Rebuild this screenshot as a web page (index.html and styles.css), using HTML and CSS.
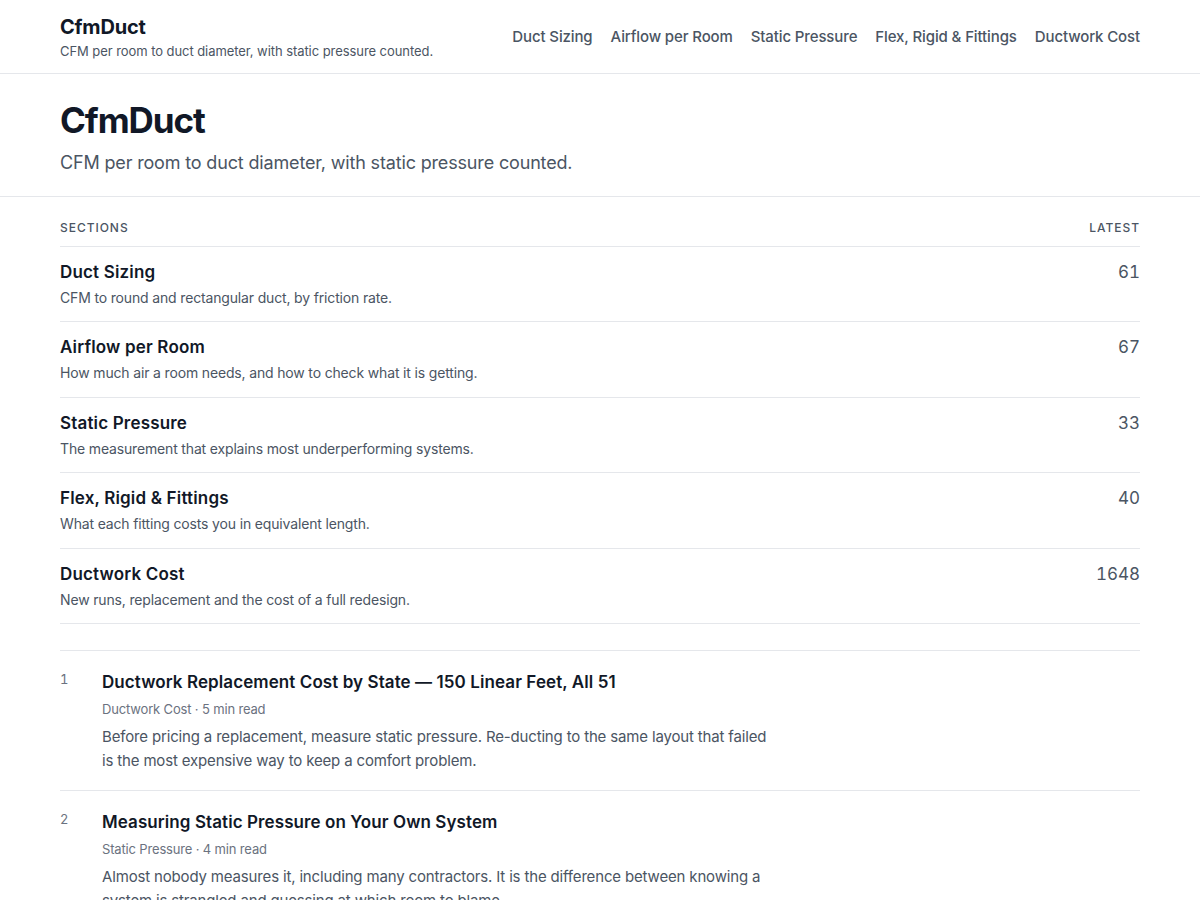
FILE: index.html
```html
<!DOCTYPE html>
<html lang="en">
<head>
    <meta charset="UTF-8">
    <meta name="viewport" content="width=device-width, initial-scale=1.0">
    <title>CfmDuct</title>
    <link rel="stylesheet" href="styles.css">
</head>
<body>
    <header class="site-header">
        <div class="wrap header-inner">
            <div class="brand">
                <a class="brand-name" href="#">CfmDuct</a>
                <p class="brand-tag">CFM per room to duct diameter, with static pressure counted.</p>
            </div>
            <nav class="nav">
                <a href="#">Duct Sizing</a>
                <a href="#">Airflow per Room</a>
                <a href="#">Static Pressure</a>
                <a href="#">Flex, Rigid &amp; Fittings</a>
                <a href="#">Ductwork Cost</a>
            </nav>
        </div>
    </header>

    <section class="hero">
        <div class="wrap">
            <h1>CfmDuct</h1>
            <p class="lede">CFM per room to duct diameter, with static pressure counted.</p>
        </div>
    </section>

    <main class="wrap">
        <div class="list-head">
            <span>Sections</span>
            <span>Latest</span>
        </div>
        <ul class="sections">
            <li class="section-row">
                <div>
                    <a class="section-title" href="#">Duct Sizing</a>
                    <p class="section-desc">CFM to round and rectangular duct, by friction rate.</p>
                </div>
                <span class="count">61</span>
            </li>
            <li class="section-row">
                <div>
                    <a class="section-title" href="#">Airflow per Room</a>
                    <p class="section-desc">How much air a room needs, and how to check what it is getting.</p>
                </div>
                <span class="count">67</span>
            </li>
            <li class="section-row">
                <div>
                    <a class="section-title" href="#">Static Pressure</a>
                    <p class="section-desc">The measurement that explains most underperforming systems.</p>
                </div>
                <span class="count">33</span>
            </li>
            <li class="section-row">
                <div>
                    <a class="section-title" href="#">Flex, Rigid &amp; Fittings</a>
                    <p class="section-desc">What each fitting costs you in equivalent length.</p>
                </div>
                <span class="count">40</span>
            </li>
            <li class="section-row">
                <div>
                    <a class="section-title" href="#">Ductwork Cost</a>
                    <p class="section-desc">New runs, replacement and the cost of a full redesign.</p>
                </div>
                <span class="count">1648</span>
            </li>
        </ul>

        <ol class="articles">
            <li class="article">
                <span class="article-num">1</span>
                <div>
                    <a class="article-title" href="#">Ductwork Replacement Cost by State — 150 Linear Feet, All 51</a>
                    <p class="article-meta">Ductwork Cost · 5 min read</p>
                    <p class="article-excerpt">Before pricing a replacement, measure static pressure. Re-ducting to the same layout that failed is the most expensive way to keep a comfort problem.</p>
                </div>
            </li>
            <li class="article">
                <span class="article-num">2</span>
                <div>
                    <a class="article-title" href="#">Measuring Static Pressure on Your Own System</a>
                    <p class="article-meta">Static Pressure · 4 min read</p>
                    <p class="article-excerpt">Almost nobody measures it, including many contractors. It is the difference between knowing a system is strangled and guessing at which room to blame.</p>
                </div>
            </li>
        </ol>
    </main>
</body>
</html>
```

FILE: styles.css
```css
body {
    font-family: Inter, "Noto Sans", sans-serif;
    margin: 0;
    padding: 0;
    background: #fff;
    color: #111827;
    letter-spacing: -0.01em;
}
a {
    color: inherit;
    text-decoration: none;
}
p, h1, ul, ol {
    margin: 0;
    padding: 0;
}
ul, ol {
    list-style: none;
}
.wrap {
    max-width: 1080px;
    margin: 0 auto;
}

/* top bar */
.site-header {
    border-bottom: 1px solid #e5e7eb;
}
.header-inner {
    display: flex;
    justify-content: space-between;
    align-items: center;
    padding: 15px 0 12px;
}
.brand-name {
    display: block;
    font-size: 20px;
    line-height: 24px;
    font-weight: 700;
    letter-spacing: -0.01em;
}
.brand-tag {
    margin-top: 2px;
    font-size: 13px;
    line-height: 20px;
    color: #4b5563;
    letter-spacing: -0.005em;
}
.nav {
    display: flex;
    gap: 18px;
    margin-bottom: 3px;
}
.nav a {
    font-size: 15px;
    line-height: 20px;
    color: #4b5563;
    font-weight: 500;
    letter-spacing: -0.008em;
}

/* hero */
.hero {
    border-bottom: 1px solid #e5e7eb;
    padding: 22px 0 19px;
}
.hero h1 {
    font-size: 35px;
    line-height: 48px;
    font-weight: 700;
    letter-spacing: -0.03em;
}
.lede {
    margin-top: 5px;
    font-size: 18px;
    line-height: 28px;
    color: #4b5563;
}

/* sections table */
.list-head {
    display: flex;
    justify-content: space-between;
    padding: 23px 0 10px;
    border-bottom: 1px solid #e5e7eb;
    font-size: 12px;
    line-height: 16px;
    font-weight: 500;
    letter-spacing: 0.08em;
    text-transform: uppercase;
    color: #4b5563;
}
.section-row {
    display: flex;
    justify-content: space-between;
    align-items: flex-start;
    padding: 13px 0 13.4px;
    border-bottom: 1px solid #e5e7eb;
}
.section-title {
    display: block;
    font-size: 17px;
    line-height: 24px;
    font-weight: 600;
    letter-spacing: 0.01em;
}
.section-desc {
    margin-top: 4px;
    font-size: 14px;
    line-height: 20px;
    color: #4b5563;
}
.count {
    font-size: 17px;
    line-height: 24px;
    color: #4b5563;
    font-variant-numeric: tabular-nums;
    letter-spacing: 0;
}

/* latest articles */
.articles {
    margin-top: 26px;
    border-top: 1px solid #e5e7eb;
}
.article {
    display: flex;
    padding: 18px 0 17px;
    border-bottom: 1px solid #e5e7eb;
}
.article-num {
    flex: 0 0 42px;
    font-size: 13px;
    line-height: 18px;
    color: #6b7280;
    font-variant-numeric: tabular-nums;
    padding-top: 1px;
}
.article-title {
    display: block;
    margin-top: 1px;
    font-size: 17px;
    line-height: 24px;
    font-weight: 600;
    letter-spacing: 0.005em;
}
.article-meta {
    margin-top: 6px;
    font-size: 13px;
    line-height: 18px;
    color: #6b7280;
}
.article-excerpt {
    margin-top: 7px;
    max-width: 665px;
    font-size: 15px;
    line-height: 24px;
    color: #4b5563;
}
```
